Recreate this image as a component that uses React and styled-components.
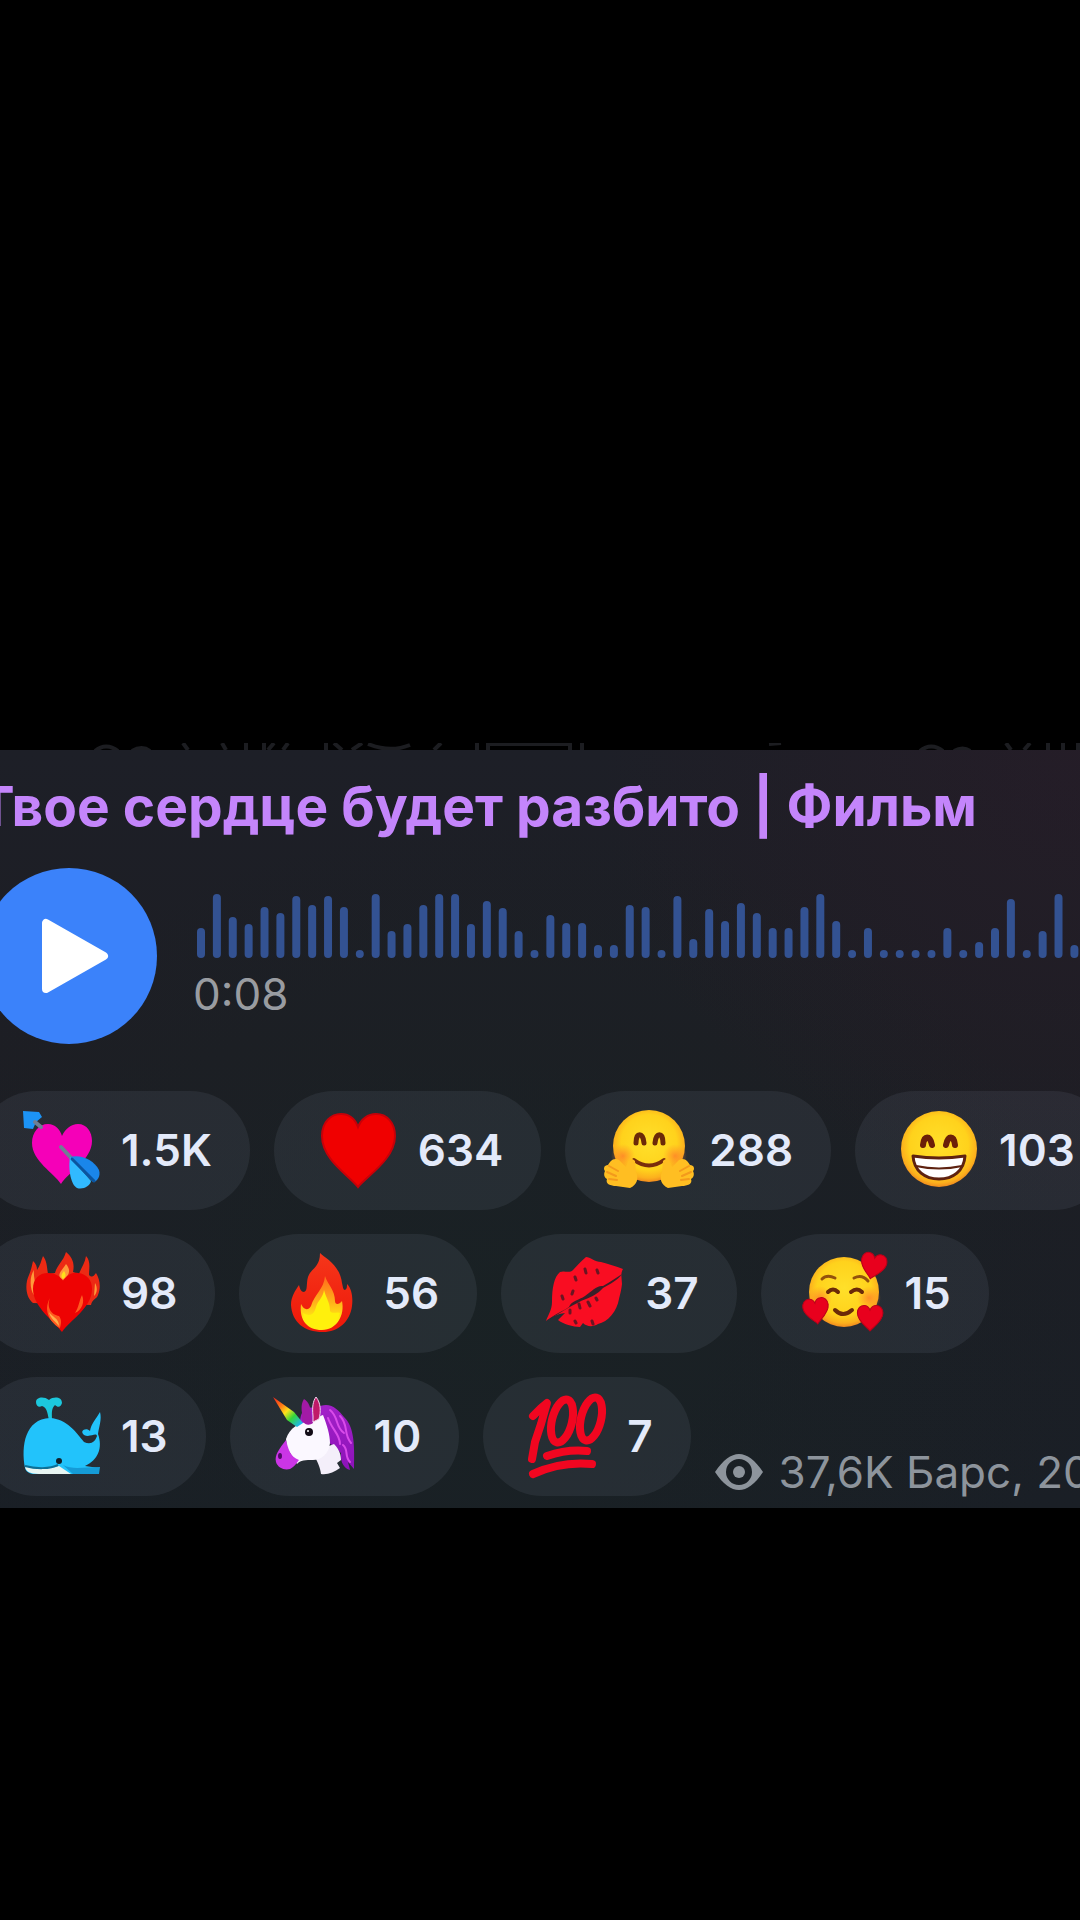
import React, { useState } from 'react';
import styled, { createGlobalStyle } from 'styled-components';

const GlobalStyle = createGlobalStyle`
    * {
        box-sizing: border-box;
    }
    body {
        margin: 0;
        background: #000;
        font-family: Inter, Roboto, 'Liberation Sans', sans-serif;
    }
`;

const bars = [
    30, 64, 41, 34, 51, 45, 62, 53, 62, 51, 8, 64, 27, 34, 53, 64, 64, 34, 57, 50, 27, 8, 43, 35,
    35, 13, 13, 53, 51, 8, 62, 19, 49, 37, 55, 45, 30, 30, 51, 64, 37, 8, 30, 8, 8, 8, 8, 30, 8,
    16, 30, 59, 8, 27, 64, 13,
];
const BAR_STEP = 15.88;

const Page = styled.div`
    display: grid;
    grid-template-rows: 9fr auto 5fr;
    grid-template-columns: minmax(0, 1fr);
    min-height: 100vh;
    background: #000;
`;

const Post = styled.article`
    grid-row: 2;
    overflow: hidden;
`;

const Wallpaper = styled.svg`
    display: block;
    width: 100%;
    height: 7px;
    fill: none;
    stroke: #1c1d21;
    stroke-width: 4;
`;

const Bubble = styled.section`
    display: flex;
    flex-direction: column;
    padding: 24px 0 12px;
    background:
        radial-gradient(ellipse 480px 460px at 100% 0%, rgba(44, 27, 40, 0.5), transparent),
        radial-gradient(ellipse 600px 500px at 45% 75%, rgba(25, 34, 36, 0.8), transparent),
        linear-gradient(180deg, #1d1f27 0%, #1d1e24 40%, #1a1f26 100%);
`;

const Title = styled.h2`
    margin: 0 0 30px -22px;
    color: #c485fb;
    font-size: 55px;
    font-weight: 700;
    line-height: 64px;
    white-space: nowrap;
`;

const Player = styled.div`
    display: flex;
    align-items: center;
    gap: 36px;
    margin: 0 0 47px -19px;
`;

const PlayButton = styled.button`
    display: flex;
    flex: none;
    align-items: center;
    justify-content: center;
    width: 176px;
    height: 176px;
    padding: 0;
    border: 0;
    border-radius: 50%;
    background: #3b82fa;
    cursor: pointer;
    svg {
        width: 80px;
        height: 80px;
        fill: #fff;
        stroke: #fff;
        stroke-width: 8;
        stroke-linejoin: round;
    }
`;

const Track = styled.div`
    display: flex;
    flex-direction: column;
    gap: 12px;
`;

const Wave = styled.svg`
    display: block;
    fill: #335292;
`;

const Time = styled.time`
    color: #999ca1;
    font-size: 44px;
    line-height: 48px;
`;

const Reactions = styled.div`
    display: flex;
    flex-direction: column;
    gap: 24px;
    margin-left: -23px;
`;

const ReactionRow = styled.div`
    display: flex;
    gap: 24px;
`;

const Chip = styled.button`
    display: flex;
    flex: none;
    align-items: center;
    gap: 20px;
    height: 119px;
    padding: 0 38px 0 44px;
    border: 0;
    border-radius: 60px;
    background: rgba(190, 210, 225, 0.08);
    color: #e3eafa;
    font-family: inherit;
    font-size: 44px;
    font-weight: 600;
    line-height: 48px;
    cursor: pointer;
    svg {
        width: 80px;
        height: 80px;
        overflow: visible;
    }
`;

const Meta = styled.div`
    display: flex;
    flex: none;
    align-items: center;
    align-self: flex-end;
    gap: 16px;
    color: #8d949c;
    font-size: 44px;
    line-height: 48px;
    white-space: nowrap;
    svg {
        width: 48px;
        height: 36px;
    }
`;

const HEART = 'M40 77C32 66 4 50 4 26C4 12 13 4 23 4C31 4 37 9 40 17C43 9 50 4 58 4C69 4 77 13 77 26C77 49 49 66 40 77Z';

const MiniHeart = ({ x, y, turn }) => (
    <g transform={`translate(${x} ${y}) rotate(${turn}) scale(0.35) translate(-40 -40)`}>
        <path d={HEART} fill='#e8001d' stroke='#b90018' strokeWidth='3' />
    </g>
);

const Gradients = () => (
    <svg width='0' height='0' style={{ display: 'block' }} aria-hidden='true'>
        <defs>
            <radialGradient id='face' cx='50%' cy='45%' r='55%'>
                <stop offset='0' stopColor='#ffe02a' />
                <stop offset='0.7' stopColor='#ffd21c' />
                <stop offset='0.9' stopColor='#fcb01d' />
                <stop offset='1' stopColor='#f08a1e' />
            </radialGradient>
            <radialGradient id='blush'>
                <stop offset='0' stopColor='#ff7a2a' stopOpacity='0.75' />
                <stop offset='1' stopColor='#ff8a2a' stopOpacity='0' />
            </radialGradient>
            <linearGradient id='flame' x1='0' y1='0' x2='0' y2='1'>
                <stop offset='0' stopColor='#f5361a' />
                <stop offset='1' stopColor='#ee1709' />
            </linearGradient>
            <linearGradient id='flameInner' x1='0' y1='0' x2='0' y2='1'>
                <stop offset='0' stopColor='#ff6a1c' />
                <stop offset='0.5' stopColor='#ffb31a' />
                <stop offset='0.8' stopColor='#ffec12' />
            </linearGradient>
            <linearGradient id='horn' gradientUnits='userSpaceOnUse' x1='-1' y1='2' x2='26' y2='29'>
                <stop offset='0' stopColor='#f0271c' />
                <stop offset='0.3' stopColor='#ff7a16' />
                <stop offset='0.5' stopColor='#ffe11a' />
                <stop offset='0.72' stopColor='#35d63a' />
                <stop offset='1' stopColor='#1fb6f2' />
            </linearGradient>
            <linearGradient id='mane' x1='0' y1='0' x2='0' y2='1'>
                <stop offset='0' stopColor='#a321c9' />
                <stop offset='1' stopColor='#8c12b8' />
            </linearGradient>
        </defs>
    </svg>
);

const emojis = {
    cupid: (
        <>
            <path d='M40 74C33 63 11 51 11 33C11 22 18 14 27 14C34 14 39 19 41 26C44 19 50 14 57 14C66 14 71 22 71 31C71 50 47 62 40 74Z' fill='#f500b8' />
            <path d='M2 1L18 2L21 7L15 12L12 19L3 18Z' fill='#1c93f5' />
            <path d='M14 12L20 17M40 37L54 52' stroke='#6f7f94' strokeWidth='4' strokeLinecap='round' />
            <path d='M49 47C60 44 73 50 78 60C80 66 76 72 72 72L66 66Z' fill='#1a86ea' />
            <path d='M49 47C47 60 50 75 56 78C62 80 69 76 70 71Z' fill='#31baff' />
            <path d='M51 49L73 71' stroke='#0b559f' strokeWidth='3' strokeLinecap='round' />
        </>
    ),
    heart: <path d={HEART} fill='#f00000' stroke='#c80008' strokeWidth='2' />,
    hug: (
        <>
            <circle cx='40' cy='36' r='36' fill='url(#face)' />
            <ellipse cx='14' cy='46' rx='12' ry='12' fill='url(#blush)' />
            <ellipse cx='66' cy='46' rx='12' ry='12' fill='url(#blush)' />
            <path d='M27 33C27 22 34 22 35 33M46 33C47 22 54 22 54 33' fill='none' stroke='#6b2a08' strokeWidth='5' strokeLinecap='round' />
            <path d='M25 50Q40 61 55 50' fill='none' stroke='#7a2d0c' strokeWidth='4' strokeLinecap='round' />
            <path d='M10 50C4 47 1 52 -1 55C-5 55 -6 59 -4 61C-6 65 -4 68 -2 69C-4 74 2 76 7 76L21 78C28 75 30 68 27 62L26 51C21 46 19 51 17 57Z' fill='#ffbe22' />
            <path d='M70 50C76 47 79 52 81 55C85 55 86 59 84 61C86 65 84 68 82 69C84 74 78 76 73 76L59 78C52 75 50 68 53 62L54 51C59 46 61 51 63 57Z' fill='#ffbe22' />
            <path d='M0 56L9 61M-2 62L7 66M0 69L8 70M80 56L71 61M82 62L73 66M80 69L72 70' stroke='#f39a1c' strokeWidth='2' strokeLinecap='round' />
        </>
    ),
    grin: (
        <>
            <circle cx='40' cy='39' r='38' fill='url(#face)' />
            <path d='M24 35C25 25 31 25 33 35M47 35C49 25 55 25 56 35' fill='none' stroke='#6b1f08' strokeWidth='6' strokeLinecap='round' />
            <path d='M14 46Q40 50 66 46C65 61 54 69 40 69C26 69 15 61 14 46Z' fill='#fff' stroke='#5e2210' strokeWidth='3' strokeLinejoin='round' />
            <path d='M17 56Q40 61 63 56' fill='none' stroke='#5e2210' strokeWidth='2' />
        </>
    ),
    burning: (
        <>
            <path d='M12 50C4 44 4 30 8 22C10 17 11 13 12 8C15 11 16 13 16 17C19 13 20 8 22 3C26 8 26 15 27 21L34 20C36 12 42 9 45 -1C51 4 54 10 52 19L58 21C60 15 64 10 65 3C70 8 68 16 68 22C71 25 73 23 75 20C79 26 80 35 77 42C76 46 71 46 70 52Z' fill='#ec2a14' />
            <path d='M13 17C12 25 16 30 13 42C9 37 8 24 13 17ZM45 11C50 17 49 22 42 27C34 22 41 18 45 11ZM74 30C77 35 76 40 73 43Z' fill='#ff9a3a' />
            <path d='M43 18C46 22 44 25 42 26C39 23 41 21 43 18Z' fill='#ffe01a' />
            <path d='M41 79C33 68 12 54 12 36C12 26 18 20 27 20C34 20 39 23 42 28C46 22 51 19 57 20C66 21 71 27 71 36C71 55 49 67 41 79Z' fill='#ee0303' />
            <path d='M29 45C25 55 31 62 38 63C41 67 40 71 39 75C31 71 21 59 29 45ZM61 42C64 49 61 57 54 60C58 54 58 48 61 42Z' fill='#ff5a1f' />
            <path d='M28 59C31 64 38 65 38 73C34 68 29 65 28 59Z' fill='#ffb04a' />
        </>
    ),
    fire: (
        <>
            <path d='M37 0C42 5 57 12 59 30C60 34 60 37 62 37C64 36 64 34 64 31C69 36 70 45 69 53C67 69 55 79 40 79C21 79 9 69 8 52C8 44 12 38 16 32C17 36 18 39 21 39C25 38 23 31 25 24C28 15 37 15 37 0Z' fill='url(#flame)' />
            <path d='M42 23C45 32 52 37 52 48C52 52 56 52 59 48C62 62 54 77 39 77C24 77 16 67 18 51C21 57 25 58 28 53C31 42 41 36 42 23Z' fill='url(#flameInner)' />
            <path d='M41 37C43 45 47 49 47 58C50 62 54 58 57 60C54 71 48 76 39 76C28 76 21 70 20 60C27 64 31 62 33 54C35 47 40 45 41 37Z' fill='#fff00c' />
        </>
    ),
    kiss: (
        <>
            <path d='M1 68C3 62 7 57 7 49C7 35 9 24 15 19C20 17 24 21 28 17C32 13 36 8 41 4C45 4 50 9 56 9C63 11 71 13 78 16C75 21 77 26 77 31C76 39 75 41 74 46C72 58 63 69 53 71C48 74 42 74 38 70L35 74C28 74 18 71 13 67L20 60C12 61 6 64 1 68Z' fill='#f90d22' />
            <path d='M3 67C10 61 18 58 24 54C26 48 34 47 40 43C47 38 52 32 58 33C65 29 71 25 77 21C73 27 65 31 58 35C53 41 46 44 41 46C35 48 29 52 23 55C15 60 8 64 3 67Z' fill='#3a2029' />
            <path d='M40 16L41 20M52 17L53 20M30 24L31 27M28 38L27 41M17 43L18 46M34 51L35 55M43 49L45 53M51 45L52 47M25 57L25 60M47 68L48 71M30 68L31 70' stroke='#6a1522' strokeWidth='3' strokeLinecap='round' />
        </>
    ),
    adore: (
        <>
            <circle cx='39' cy='39' r='35' fill='url(#face)' />
            <ellipse cx='15' cy='45' rx='12' ry='12' fill='url(#blush)' />
            <ellipse cx='64' cy='45' rx='12' ry='12' fill='url(#blush)' />
            <path d='M17 26Q22 21 30 25M49 25Q57 21 63 28' fill='none' stroke='#94520c' strokeWidth='3' strokeLinecap='round' />
            <path d='M23 39Q28 34 33 39M46 39Q52 34 57 39' fill='none' stroke='#6b2a08' strokeWidth='4' strokeLinecap='round' />
            <path d='M30 57Q38 65 47 57' fill='none' stroke='#6b2a08' strokeWidth='4' strokeLinecap='round' />
            <MiniHeart x={68} y={13} turn={12} />
            <MiniHeart x={11} y={58} turn={-8} />
            <MiniHeart x={65} y={65} turn={0} />
        </>
    ),
    whale: (
        <>
            <path d='M28 24C26 15 26 12 21 10C18 12 15 10 15 6C15 1 23 0 28 4C33 0 41 1 41 7C40 11 37 12 34 9C30 13 31 17 31 24Z' fill='#1cc8dd' />
            <path d='M4 72C0 50 4 23 29 22C46 23 55 36 63 46C70 49 74 46 76 40C75 36 69 42 63 39C58 35 65 31 69 35C70 28 75 23 79 16C81 23 78 31 77 38C82 52 77 64 64 70L78 72V78H14C9 78 5 76 4 72Z' fill='#22c3fb' />
            <path d='M4 70C14 74 29 73 38 70L50 78H18C9 78 4 75 4 70Z' fill='#e8f5f2' />
            <path d='M4 70C15 73 29 73 37 69' fill='none' stroke='#0d6f96' strokeWidth='2' />
            <path d='M42 69C52 74 62 71 79 71L78 78H52Z' fill='#159bd6' />
            <circle cx='38' cy='65' r='3' fill='#10202b' />
        </>
    ),
    unicorn: (
        <>
            <path d='M26 27C26 14 33 10 42 12C55 4 64 13 70 21C79 30 81 43 80 73L74 66L76 74C68 72 66 62 67 57L52 44Z' fill='url(#mane)' />
            <path d='M56 14C65 21 61 31 70 37M54 22C58 34 66 38 66 48M66 20C75 29 69 38 77 47M69 49C75 54 70 60 76 66' fill='none' stroke='#d94bea' strokeWidth='2' strokeLinecap='round' />
            <path d='M45 54L60 48C66 54 67 60 67 64L63 67L66 72C60 76 54 79 47 78C46 71 44 67 41 61Z' fill='#f4effa' />
            <path d='M12 43C16 32 24 26 37 26C42 24 45 20 49 19C53 29 56 39 56 47C55 58 47 64 39 64C32 64 26 64 23 68L13 52Z' fill='#fbf8ff' />
            <path d='M12 44C6 52 0 59 2 66C4 73 14 76 19 71C22 69 23 66 25 64C16 61 14 52 12 44Z' fill='#cb35e6' />
            <ellipse cx='6' cy='60' rx='2' ry='3' fill='#500a66' />
            <path d='M-1 1L20 16L29 27L23 31L13 24Z' fill='url(#horn)' />
            <path d='M28 17C27 10 28 6 30 3C35 6 37 12 37 18L39 27C34 31 26 28 28 17Z' fill='#a21aa6' />
            <path d='M39 20C38 11 39 5 42 1C47 7 47 16 45 23L39 26Z' fill='#c01a68' stroke='#f0d7ef' strokeWidth='1' />
            <circle cx='35' cy='36' r='4' fill='#120b16' />
            <circle cx='34' cy='35' r='1' fill='#fff' />
        </>
    ),
    // the digits lean right and overlap, two strokes run under them
    hundred: (
        <g fill='none' stroke='#f10620' strokeWidth='8' strokeLinecap='round' strokeLinejoin='round'>
            <polyline points='6,20 14,12 20,7 14,28 8,46 5,63' />
            <ellipse cx='35' cy='25' rx='10' ry='22' transform='rotate(14 35 25)' />
            <ellipse cx='64' cy='23' rx='10' ry='22' transform='rotate(14 64 23)' />
            <path d='M20 60Q40 53 60 55M6 78Q34 65 65 68' />
        </g>
    ),
};

const rows = [
    [
        { id: 'cupid', count: '1.5K' },
        { id: 'heart', count: '634' },
        { id: 'hug', count: '288' },
        { id: 'grin', count: '103' },
    ],
    [
        { id: 'burning', count: '98' },
        { id: 'fire', count: '56' },
        { id: 'kiss', count: '37' },
        { id: 'adore', count: '15' },
    ],
    [
        { id: 'whale', count: '13' },
        { id: 'unicorn', count: '10' },
        { id: 'hundred', count: '7' },
    ],
];

function Waveform() {
    return (
        <Wave width={Math.ceil(bars.length * BAR_STEP)} height='64' aria-hidden='true'>
            {bars.map((h, i) => (
                // eslint-disable-next-line react/no-array-index-key
                <rect key={i} x={4 + i * BAR_STEP} y={64 - h} width='8' height={h} rx='4' />
            ))}
        </Wave>
    );
}

function Views() {
    return (
        <Meta>
            <svg viewBox='0 0 48 36' aria-hidden='true'>
                <path
                    d='M0 18C8 6 16 0 24 0S40 6 48 18C40 30 32 36 24 36S8 30 0 18ZM24 5A13 13 0 1 0 24 31A13 13 0 1 0 24 5Z'
                    fill='currentColor'
                    fillRule='evenodd'
                />
                <circle cx='24' cy='18' r='6' fill='currentColor' />
            </svg>
            <span>37,6K Барс, 20</span>
        </Meta>
    );
}

function App() {
    const [playing, setPlaying] = useState(false);

    return (
        <Page>
            <GlobalStyle />
            <Post>
                <Gradients />
                <Wallpaper aria-hidden='true'>
                    <path d='M95 8Q106 -1 118 8M132 8Q142 2 150 8M183 0L188 7M222 0L226 7M246 0V7M264 0V7M274 0L268 7M288 0L283 7' />
                    <path d='M326 0V7M334 0L342 7M362 0L352 7M368 1Q390 10 410 2M441 0L434 7M477 0V7M488 7V1H570V7M582 0V7' />
                    <path d='M769 1L781 0M920 8Q931 -1 943 8M954 8Q963 3 970 8M1006 0L1011 7M1030 0L1024 7M1048 0V7M1063 0V7M1078 0V7' />
                </Wallpaper>
                <Bubble>
                    <Title>Твое сердце будет разбито | Фильм</Title>
                    <Player>
                        <PlayButton
                            type='button'
                            aria-label='Play'
                            aria-pressed={playing}
                            onClick={() => setPlaying(!playing)}
                        >
                            <svg viewBox='0 0 80 80'>
                                <path d='M17 7V73L75 40Z' />
                            </svg>
                        </PlayButton>
                        <Track>
                            <Waveform />
                            <Time>0:08</Time>
                        </Track>
                    </Player>
                    <Reactions>
                        {rows.map((row, i) => (
                            <ReactionRow key={row[0].id}>
                                {row.map(({ id, count }) => (
                                    <Chip key={id} type='button'>
                                        <svg viewBox='0 0 80 80' aria-hidden='true'>
                                            {emojis[id]}
                                        </svg>
                                        <span>{count}</span>
                                    </Chip>
                                ))}
                                {i === rows.length - 1 && <Views />}
                            </ReactionRow>
                        ))}
                    </Reactions>
                </Bubble>
            </Post>
        </Page>
    );
}

export default App;
